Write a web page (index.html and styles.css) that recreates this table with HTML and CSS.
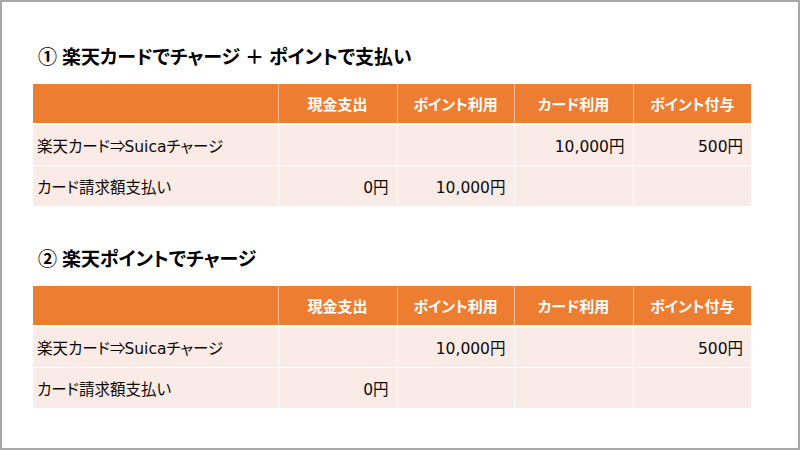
FILE: index.html
```html
<!DOCTYPE html>
<html lang="ja">
<head>
<meta charset="utf-8">
<link rel="stylesheet" href="styles.css">
</head>
<body>
<div class="slide">
  <section class="block">
    <h2 class="title">① 楽天カードでチャージ ＋ ポイントで支払い</h2>
    <table class="tbl">
      <colgroup>
        <col class="c1"><col class="c2"><col class="c3"><col class="c4"><col class="c5">
      </colgroup>
      <thead>
        <tr><th></th><th>現金支出</th><th>ポイント利用</th><th>カード利用</th><th>ポイント付与</th></tr>
      </thead>
      <tbody>
        <tr><td class="label">楽天カード<span class="arrow">⇒</span>Suicaチャージ</td><td></td><td></td><td class="num">10,000円</td><td class="num">500円</td></tr>
        <tr><td class="label">カード請求額支払い</td><td class="num">0円</td><td class="num">10,000円</td><td></td><td></td></tr>
      </tbody>
    </table>
  </section>
  <section class="block second">
    <h2 class="title">② 楽天ポイントでチャージ</h2>
    <table class="tbl">
      <colgroup>
        <col class="c1"><col class="c2"><col class="c3"><col class="c4"><col class="c5">
      </colgroup>
      <thead>
        <tr><th></th><th>現金支出</th><th>ポイント利用</th><th>カード利用</th><th>ポイント付与</th></tr>
      </thead>
      <tbody>
        <tr><td class="label">楽天カード<span class="arrow">⇒</span>Suicaチャージ</td><td></td><td class="num">10,000円</td><td></td><td class="num">500円</td></tr>
        <tr><td class="label">カード請求額支払い</td><td class="num">0円</td><td></td><td></td><td></td></tr>
      </tbody>
    </table>
  </section>
</div>
</body>
</html>
```

FILE: styles.css
```css
html, body {
  margin: 0;
  padding: 0;
  background: #ffffff;
}

.slide {
  box-sizing: border-box;
  width: 800px;
  height: 450px;
  border: 2px solid #a8a8a8;
  padding: 43px 0 0 31px;
  font-family: "Noto Sans", "Noto Sans CJK JP", sans-serif;
  font-feature-settings: "palt";
  color: #111111;
}

.block.second {
  margin-top: 41px;
}

.title {
  margin: 0 0 15px 5px;
  font-size: 19px;
  line-height: 24px;
  font-weight: 700;
  color: #000000;
}

.tbl {
  border-collapse: collapse;
  table-layout: fixed;
  width: 718px;
}

.c1 { width: 245px; }
.c2 { width: 119px; }
.c3 { width: 117px; }
.c4 { width: 119px; }
.c5 { width: 118px; }

.tbl th {
  background: #ed7d31;
  color: #ffffff;
  font-size: 15px;
  font-weight: 700;
  height: 39px;
  padding: 0;
  text-align: center;
  border-left: 1px solid #f6c09c;
  border-bottom: 2px solid #ffffff;
}

.tbl th:first-child {
  border-left: none;
}

.tbl td {
  background: #fbebe6;
  height: 40px;
  padding: 0 8px;
  font-family: "DejaVu Sans", "Noto Sans CJK JP", sans-serif;
  font-size: 15.5px;
  color: #0a0a0a;
  border-left: 1px solid #ffffff;
  border-top: 1px solid #ffffff;
}

.tbl td:first-child {
  border-left: none;
}

.tbl td.label {
  text-align: left;
  padding-left: 4px;
}

.tbl td.num {
  text-align: right;
}

.arrow {
  font-family: "Noto Sans CJK JP", sans-serif;
  font-feature-settings: normal;
  letter-spacing: -1px;
}
```
